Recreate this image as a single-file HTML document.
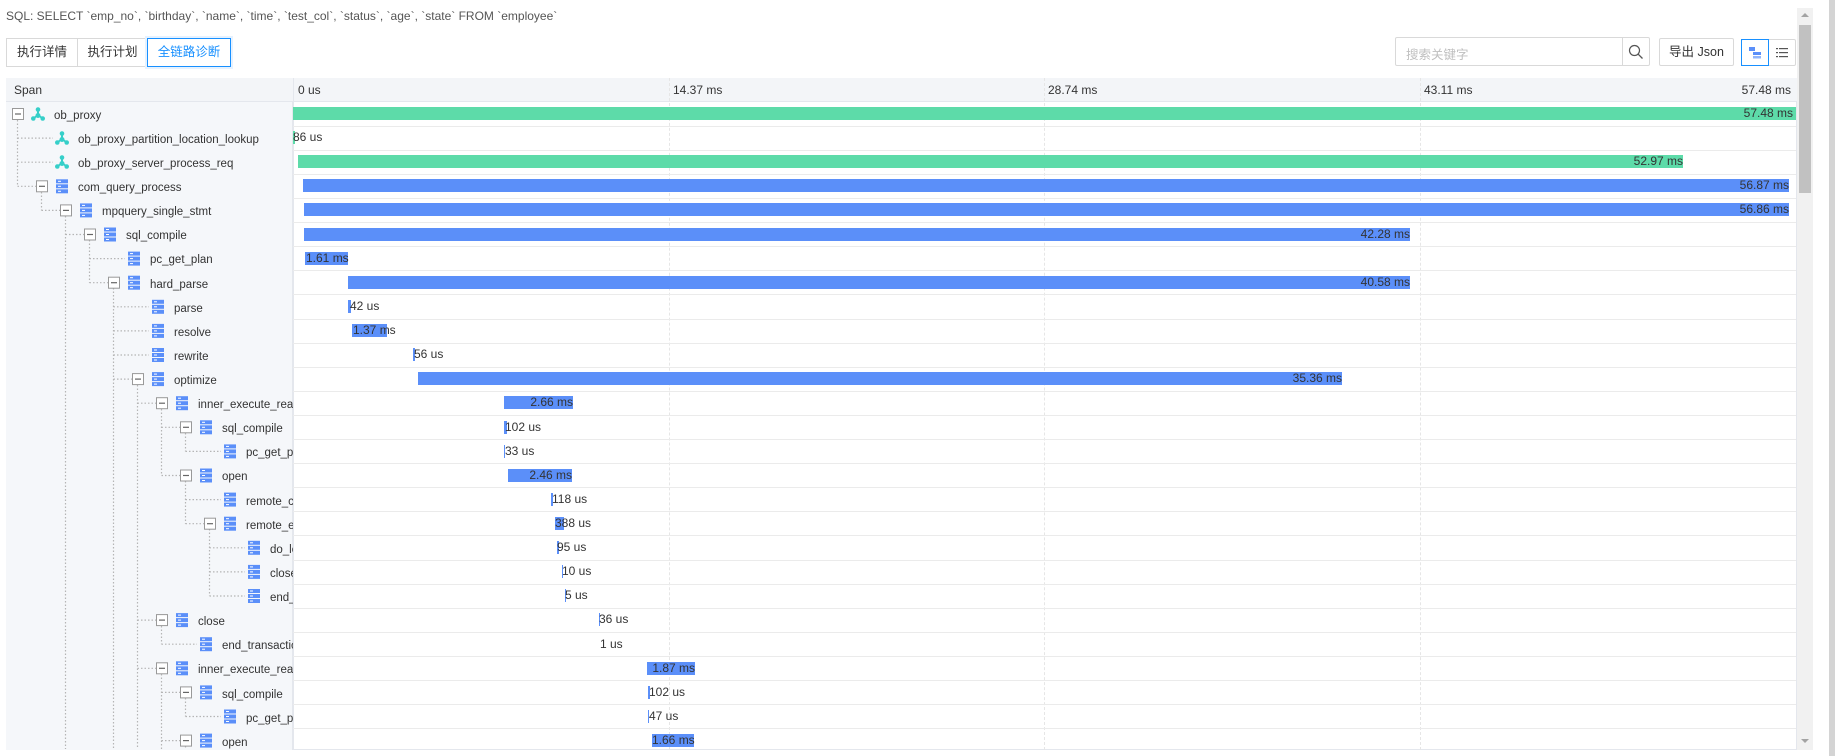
<!DOCTYPE html>
<html><head><meta charset="utf-8">
<style>
*{margin:0;padding:0;box-sizing:border-box}
body{width:1835px;height:756px;overflow:hidden;background:#fff;font-family:"Liberation Sans","Noto Sans CJK SC",sans-serif;color:#333;position:relative}
.abs{position:absolute}
.sql{left:6px;top:9px;font-size:12px;color:#555;white-space:nowrap}
.tab{top:38px;height:29px;border:1px solid #d9d9d9;font-size:12.5px;line-height:27px;text-align:center;color:#333;background:#fff}
.panel{left:6px;top:78px;width:1791px;height:672px;border:1px solid #e4e7ed;overflow:hidden}
.left{left:6px;top:78px;width:287px;height:672px;background:#f5f7fa;border-right:1px solid #e4e7ed}
.hdr{left:6px;top:78px;width:1791px;height:24px;background:#f3f5f8;border-bottom:1px solid #e4e7ed;font-size:12px;line-height:24px}
.rowl{left:293px;width:1503px;height:1px;background:#ebebeb}
.grid{top:78px;width:0;height:672px;border-left:1px dashed #e6e6e6}
.t{font-size:11.5px;white-space:nowrap;line-height:14px}
.bar{height:13px}
.g{background:#5ddba9}
.b{background:#5b8ff9}
.lb{font-size:12px;line-height:13px;white-space:nowrap;color:#333}
.clip{left:6px;top:102px;width:287px;height:647px;overflow:hidden}
</style></head><body>
<div class="abs sql">SQL: SELECT `emp_no`, `birthday`, `name`, `time`, `test_col`, `status`, `age`, `state` FROM `employee`</div>
<div class="abs tab" style="left:6px;width:72px">执行详情</div>
<div class="abs tab" style="left:77px;width:71px">执行计划</div>
<div class="abs tab" style="left:147px;width:84px;border-color:#1890ff;color:#1890ff;box-shadow:0 0 0 2px #e6f2ff">全链路诊断</div>

<div class="abs" style="left:1395px;top:37px;width:255px;height:29px;border:1px solid #d9d9d9;border-radius:2px"></div>
<div class="abs" style="left:1406px;top:44px;font-size:12.5px;color:#bfbfbf">搜索关键字</div>
<div class="abs" style="left:1622px;top:37px;width:1px;height:29px;background:#d9d9d9"></div>
<svg class="abs" style="left:1628px;top:44px" width="16" height="16" viewBox="0 0 16 16"><circle cx="6.5" cy="6.5" r="5" fill="none" stroke="#555" stroke-width="1.2"/><path d="M10.2 10.2L14.5 14.5" stroke="#555" stroke-width="1.3"/></svg>
<div class="abs" style="left:1659px;top:38px;width:75px;height:28px;border:1px solid #d9d9d9;border-radius:2px;font-size:12.5px;line-height:26px;text-align:center">导出 Json</div>
<div class="abs" style="left:1741px;top:39px;width:55px;height:27px;border:1px solid #d9d9d9;border-radius:2px"></div>
<div class="abs" style="left:1741px;top:39px;width:28px;height:27px;border:1px solid #1890ff"></div>
<svg class="abs" style="left:1748px;top:46px" width="14" height="13" viewBox="0 0 14 13"><rect x="1" y="1" width="6" height="4" fill="#5b8ff9"/><rect x="5" y="6" width="8" height="3" fill="#5b8ff9"/><rect x="5" y="10" width="8" height="2.5" fill="#91b5fb"/></svg>
<svg class="abs" style="left:1775px;top:46px" width="14" height="13" viewBox="0 0 14 13"><g fill="#555"><rect x="1" y="2" width="2" height="1.2"/><rect x="4" y="2" width="9" height="1.2"/><rect x="1" y="6" width="2" height="1.2"/><rect x="4" y="6" width="9" height="1.2"/><rect x="1" y="10" width="2" height="1.2"/><rect x="4" y="10" width="9" height="1.2"/></g></svg>

<div class="abs panel"></div>
<div class="abs left"></div>
<div class="abs hdr"><span style="position:absolute;left:8px">Span</span>
<span style="position:absolute;left:292px">0 us</span>
<span style="position:absolute;left:667px">14.37 ms</span>
<span style="position:absolute;left:1042px">28.74 ms</span>
<span style="position:absolute;left:1418px">43.11 ms</span>
<span style="position:absolute;right:6px">57.48 ms</span></div>
<div class="abs grid" style="left:669px"></div>
<div class="abs grid" style="left:1044px"></div>
<div class="abs grid" style="left:1420px"></div>
<div class="abs" style="left:293px;top:78px;width:1px;height:672px;background:#e4e7ed"></div>

<div class="abs rowl" style="top:126px"></div><div class="abs rowl" style="top:150px"></div><div class="abs rowl" style="top:174px"></div><div class="abs rowl" style="top:198px"></div><div class="abs rowl" style="top:222px"></div><div class="abs rowl" style="top:246px"></div><div class="abs rowl" style="top:270px"></div><div class="abs rowl" style="top:294px"></div><div class="abs rowl" style="top:319px"></div><div class="abs rowl" style="top:343px"></div><div class="abs rowl" style="top:367px"></div><div class="abs rowl" style="top:391px"></div><div class="abs rowl" style="top:415px"></div><div class="abs rowl" style="top:439px"></div><div class="abs rowl" style="top:463px"></div><div class="abs rowl" style="top:487px"></div><div class="abs rowl" style="top:511px"></div><div class="abs rowl" style="top:535px"></div><div class="abs rowl" style="top:560px"></div><div class="abs rowl" style="top:584px"></div><div class="abs rowl" style="top:608px"></div><div class="abs rowl" style="top:632px"></div><div class="abs rowl" style="top:656px"></div><div class="abs rowl" style="top:680px"></div><div class="abs rowl" style="top:704px"></div><div class="abs rowl" style="top:728px"></div>

<svg class="abs" style="left:0;top:0" width="293" height="749">
<g stroke="#b5b5b5" stroke-width="1.2" stroke-dasharray="1.5,2" fill="none">
<path d="M17.5 120V186.3M41.5 192V210.4M65.5 216V756M89.5 240V282.7M113.5 288V756M137.5 385V756M161.5 409V475.5M185.5 433V451.4M185.5 481V523.7M209.5 529V596M161.5 626V644.2M161.5 674V756M185.5 698V716.5M185.5 746V756"/>
<path d="M17.5 138.1H53M17.5 162.2H53M17.5 186.3H36M41.5 210.4H60M65.5 234.5H84M89.5 258.6H125M89.5 282.7H108M113.5 306.8H149M113.5 330.9H149M113.5 355H149M113.5 379.1H132M137.5 403.2H156M161.5 427.3H180M185.5 451.4H221M161.5 475.5H180M185.5 499.6H221M185.5 523.7H204M209.5 547.8H245M209.5 571.9H245M209.5 596H245M137.5 620.1H156M161.5 644.2H197M137.5 668.3H156M161.5 692.4H180M185.5 716.5H221M161.5 740.6H180"/>
</g>
<defs>
<g id="net"><circle cx="7" cy="2.5" r="2.3" fill="#36cfc9"/><circle cx="2.3" cy="11.5" r="2.3" fill="#36cfc9"/><circle cx="11.7" cy="11.5" r="2.3" fill="#36cfc9"/><path d="M7 2.5L7 8M7 8L2.3 11.5M7 8L11.7 11.5" stroke="#36cfc9" stroke-width="2"/><circle cx="7" cy="8.5" r="2.5" fill="#36cfc9"/></g>
<g id="srv"><rect x="0" y="0" width="12" height="4" fill="#5b8ff9"/><rect x="0" y="5" width="12" height="4" fill="#5b8ff9"/><rect x="0" y="10" width="12" height="4" fill="#5b8ff9"/><rect x="2" y="1.5" width="3" height="1" fill="#fff"/><rect x="2" y="6.5" width="3" height="1" fill="#fff"/><rect x="2" y="11.5" width="3" height="1" fill="#fff"/></g>
<g id="bxm"><rect x="0.5" y="0.5" width="11" height="11" fill="#fff" stroke="#999"/><path d="M3 6H9" stroke="#666" stroke-width="1.2"/></g>
</defs>
<use href="#bxm" x="12" y="108"/><use href="#net" x="31" y="107"/>
<use href="#net" x="55" y="131"/>
<use href="#net" x="55" y="155"/>
<use href="#bxm" x="36" y="180.3"/><use href="#srv" x="56" y="179.3"/>
<use href="#bxm" x="60" y="204.4"/><use href="#srv" x="80" y="203.4"/>
<use href="#bxm" x="84" y="228.5"/><use href="#srv" x="104" y="227.5"/>
<use href="#srv" x="128" y="251.6"/>
<use href="#bxm" x="108" y="276.7"/><use href="#srv" x="128" y="275.7"/>
<use href="#srv" x="152" y="299.8"/>
<use href="#srv" x="152" y="323.9"/>
<use href="#srv" x="152" y="348"/>
<use href="#bxm" x="132" y="373.1"/><use href="#srv" x="152" y="372.1"/>
<use href="#bxm" x="156" y="397.2"/><use href="#srv" x="176" y="396.2"/>
<use href="#bxm" x="180" y="421.3"/><use href="#srv" x="200" y="420.3"/>
<use href="#srv" x="224" y="444.4"/>
<use href="#bxm" x="180" y="469.5"/><use href="#srv" x="200" y="468.5"/>
<use href="#srv" x="224" y="492.6"/>
<use href="#bxm" x="204" y="517.7"/><use href="#srv" x="224" y="516.7"/>
<use href="#srv" x="248" y="540.8"/>
<use href="#srv" x="248" y="564.9"/>
<use href="#srv" x="248" y="589"/>
<use href="#bxm" x="156" y="614.1"/><use href="#srv" x="176" y="613.1"/>
<use href="#srv" x="200" y="637.2"/>
<use href="#bxm" x="156" y="662.3"/><use href="#srv" x="176" y="661.3"/>
<use href="#bxm" x="180" y="686.4"/><use href="#srv" x="200" y="685.4"/>
<use href="#srv" x="224" y="709.5"/>
<use href="#bxm" x="180" y="734.6"/><use href="#srv" x="200" y="733.6"/>
</svg>

<div class="abs clip">
<div class="abs t" style="left:48px;top:7px">ob_proxy</div>
<div class="abs t" style="left:72px;top:31px">ob_proxy_partition_location_lookup</div>
<div class="abs t" style="left:72px;top:55px">ob_proxy_server_process_req</div>
<div class="abs t" style="left:72px;top:79px">com_query_process</div>
<div class="abs t" style="left:96px;top:103px">mpquery_single_stmt</div>
<div class="abs t" style="left:120px;top:127px">sql_compile</div>
<div class="abs t" style="left:144px;top:151px">pc_get_plan</div>
<div class="abs t" style="left:144px;top:176px">hard_parse</div>
<div class="abs t" style="left:168px;top:200px">parse</div>
<div class="abs t" style="left:168px;top:224px">resolve</div>
<div class="abs t" style="left:168px;top:248px">rewrite</div>
<div class="abs t" style="left:168px;top:272px">optimize</div>
<div class="abs t" style="left:192px;top:296px">inner_execute_read</div>
<div class="abs t" style="left:216px;top:320px">sql_compile</div>
<div class="abs t" style="left:240px;top:344px">pc_get_plan</div>
<div class="abs t" style="left:216px;top:368px">open</div>
<div class="abs t" style="left:240px;top:393px">remote_compile</div>
<div class="abs t" style="left:240px;top:417px">remote_execute</div>
<div class="abs t" style="left:264px;top:441px">do_local</div>
<div class="abs t" style="left:264px;top:465px">close</div>
<div class="abs t" style="left:264px;top:489px">end_trans</div>
<div class="abs t" style="left:192px;top:513px">close</div>
<div class="abs t" style="left:216px;top:537px">end_transaction</div>
<div class="abs t" style="left:192px;top:561px">inner_execute_read</div>
<div class="abs t" style="left:216px;top:586px">sql_compile</div>
<div class="abs t" style="left:240px;top:610px">pc_get_plan</div>
<div class="abs t" style="left:216px;top:634px">open</div>
</div>

<div class="abs bar g" style="left:293px;top:107px;width:1503px"></div><div class="abs lb" style="left:293px;width:1500px;text-align:right;top:107px">57.48 ms</div>
<div class="abs bar g" style="left:293px;top:131px;width:2px"></div><div class="abs lb" style="left:293px;top:131px">86 us</div>
<div class="abs bar g" style="left:298px;top:155px;width:1385px"></div><div class="abs lb" style="left:298px;width:1385px;text-align:right;top:155px">52.97 ms</div>
<div class="abs bar b" style="left:303px;top:179px;width:1486px"></div><div class="abs lb" style="left:303px;width:1486px;text-align:right;top:179px">56.87 ms</div>
<div class="abs bar b" style="left:304px;top:203px;width:1485px"></div><div class="abs lb" style="left:304px;width:1485px;text-align:right;top:203px">56.86 ms</div>
<div class="abs bar b" style="left:304px;top:228px;width:1106px"></div><div class="abs lb" style="left:304px;width:1106px;text-align:right;top:228px">42.28 ms</div>
<div class="abs bar b" style="left:305px;top:252px;width:43px"></div><div class="abs lb" style="left:306px;top:252px">1.61 ms</div>
<div class="abs bar b" style="left:348px;top:276px;width:1062px"></div><div class="abs lb" style="left:348px;width:1062px;text-align:right;top:276px">40.58 ms</div>
<div class="abs bar b" style="left:348px;top:300px;width:3px"></div><div class="abs lb" style="left:350px;top:300px">42 us</div>
<div class="abs bar b" style="left:352px;top:324px;width:35px"></div><div class="abs lb" style="left:353px;top:324px">1.37 ms</div>
<div class="abs bar b" style="left:413px;top:348px;width:2px"></div><div class="abs lb" style="left:414px;top:348px">56 us</div>
<div class="abs bar b" style="left:418px;top:372px;width:924px"></div><div class="abs lb" style="left:418px;width:924px;text-align:right;top:372px">35.36 ms</div>
<div class="abs bar b" style="left:504px;top:396px;width:69px"></div><div class="abs lb" style="left:504px;width:69px;text-align:right;top:396px">2.66 ms</div>
<div class="abs bar b" style="left:504px;top:421px;width:3px"></div><div class="abs lb" style="left:505px;top:421px">102 us</div>
<div class="abs bar b" style="left:504px;top:445px;width:1px"></div><div class="abs lb" style="left:505px;top:445px">33 us</div>
<div class="abs bar b" style="left:508px;top:469px;width:64px"></div><div class="abs lb" style="left:508px;width:64px;text-align:right;top:469px">2.46 ms</div>
<div class="abs bar b" style="left:551px;top:493px;width:2px"></div><div class="abs lb" style="left:552px;top:493px">118 us</div>
<div class="abs bar b" style="left:555px;top:517px;width:9px"></div><div class="abs lb" style="left:555px;top:517px">388 us</div>
<div class="abs bar b" style="left:557px;top:541px;width:2px"></div><div class="abs lb" style="left:557px;top:541px">95 us</div>
<div class="abs bar b" style="left:562px;top:565px;width:1px"></div><div class="abs lb" style="left:562px;top:565px">10 us</div>
<div class="abs bar b" style="left:565px;top:589px;width:1px"></div><div class="abs lb" style="left:565px;top:589px">5 us</div>
<div class="abs bar b" style="left:599px;top:613px;width:1px"></div><div class="abs lb" style="left:599px;top:613px">36 us</div>
<div class="abs lb" style="left:600px;top:638px">1 us</div>
<div class="abs bar b" style="left:647px;top:662px;width:48px"></div><div class="abs lb" style="left:647px;width:48px;text-align:right;top:662px">1.87 ms</div>
<div class="abs bar b" style="left:648px;top:686px;width:2px"></div><div class="abs lb" style="left:649px;top:686px">102 us</div>
<div class="abs bar b" style="left:648px;top:710px;width:1px"></div><div class="abs lb" style="left:649px;top:710px">47 us</div>
<div class="abs bar b" style="left:652px;top:734px;width:42px"></div><div class="abs lb" style="left:652px;width:42px;text-align:right;top:734px">1.66 ms</div>

<div class="abs" style="left:1797px;top:8px;width:16px;height:742px;background:#f1f1f1"></div>
<div class="abs" style="left:1799px;top:25px;width:12px;height:168px;background:#c1c1c1"></div>
<div class="abs" style="left:1801px;top:13px;width:0;height:0;border-left:4px solid transparent;border-right:4px solid transparent;border-bottom:4px solid #a3a3a3"></div>
<div class="abs" style="left:1801px;top:739px;width:0;height:0;border-left:4px solid transparent;border-right:4px solid transparent;border-top:4px solid #a3a3a3"></div>
<div class="abs" style="left:1829px;top:0;width:6px;height:756px;background:#d4d4d4"></div>
</body></html>
